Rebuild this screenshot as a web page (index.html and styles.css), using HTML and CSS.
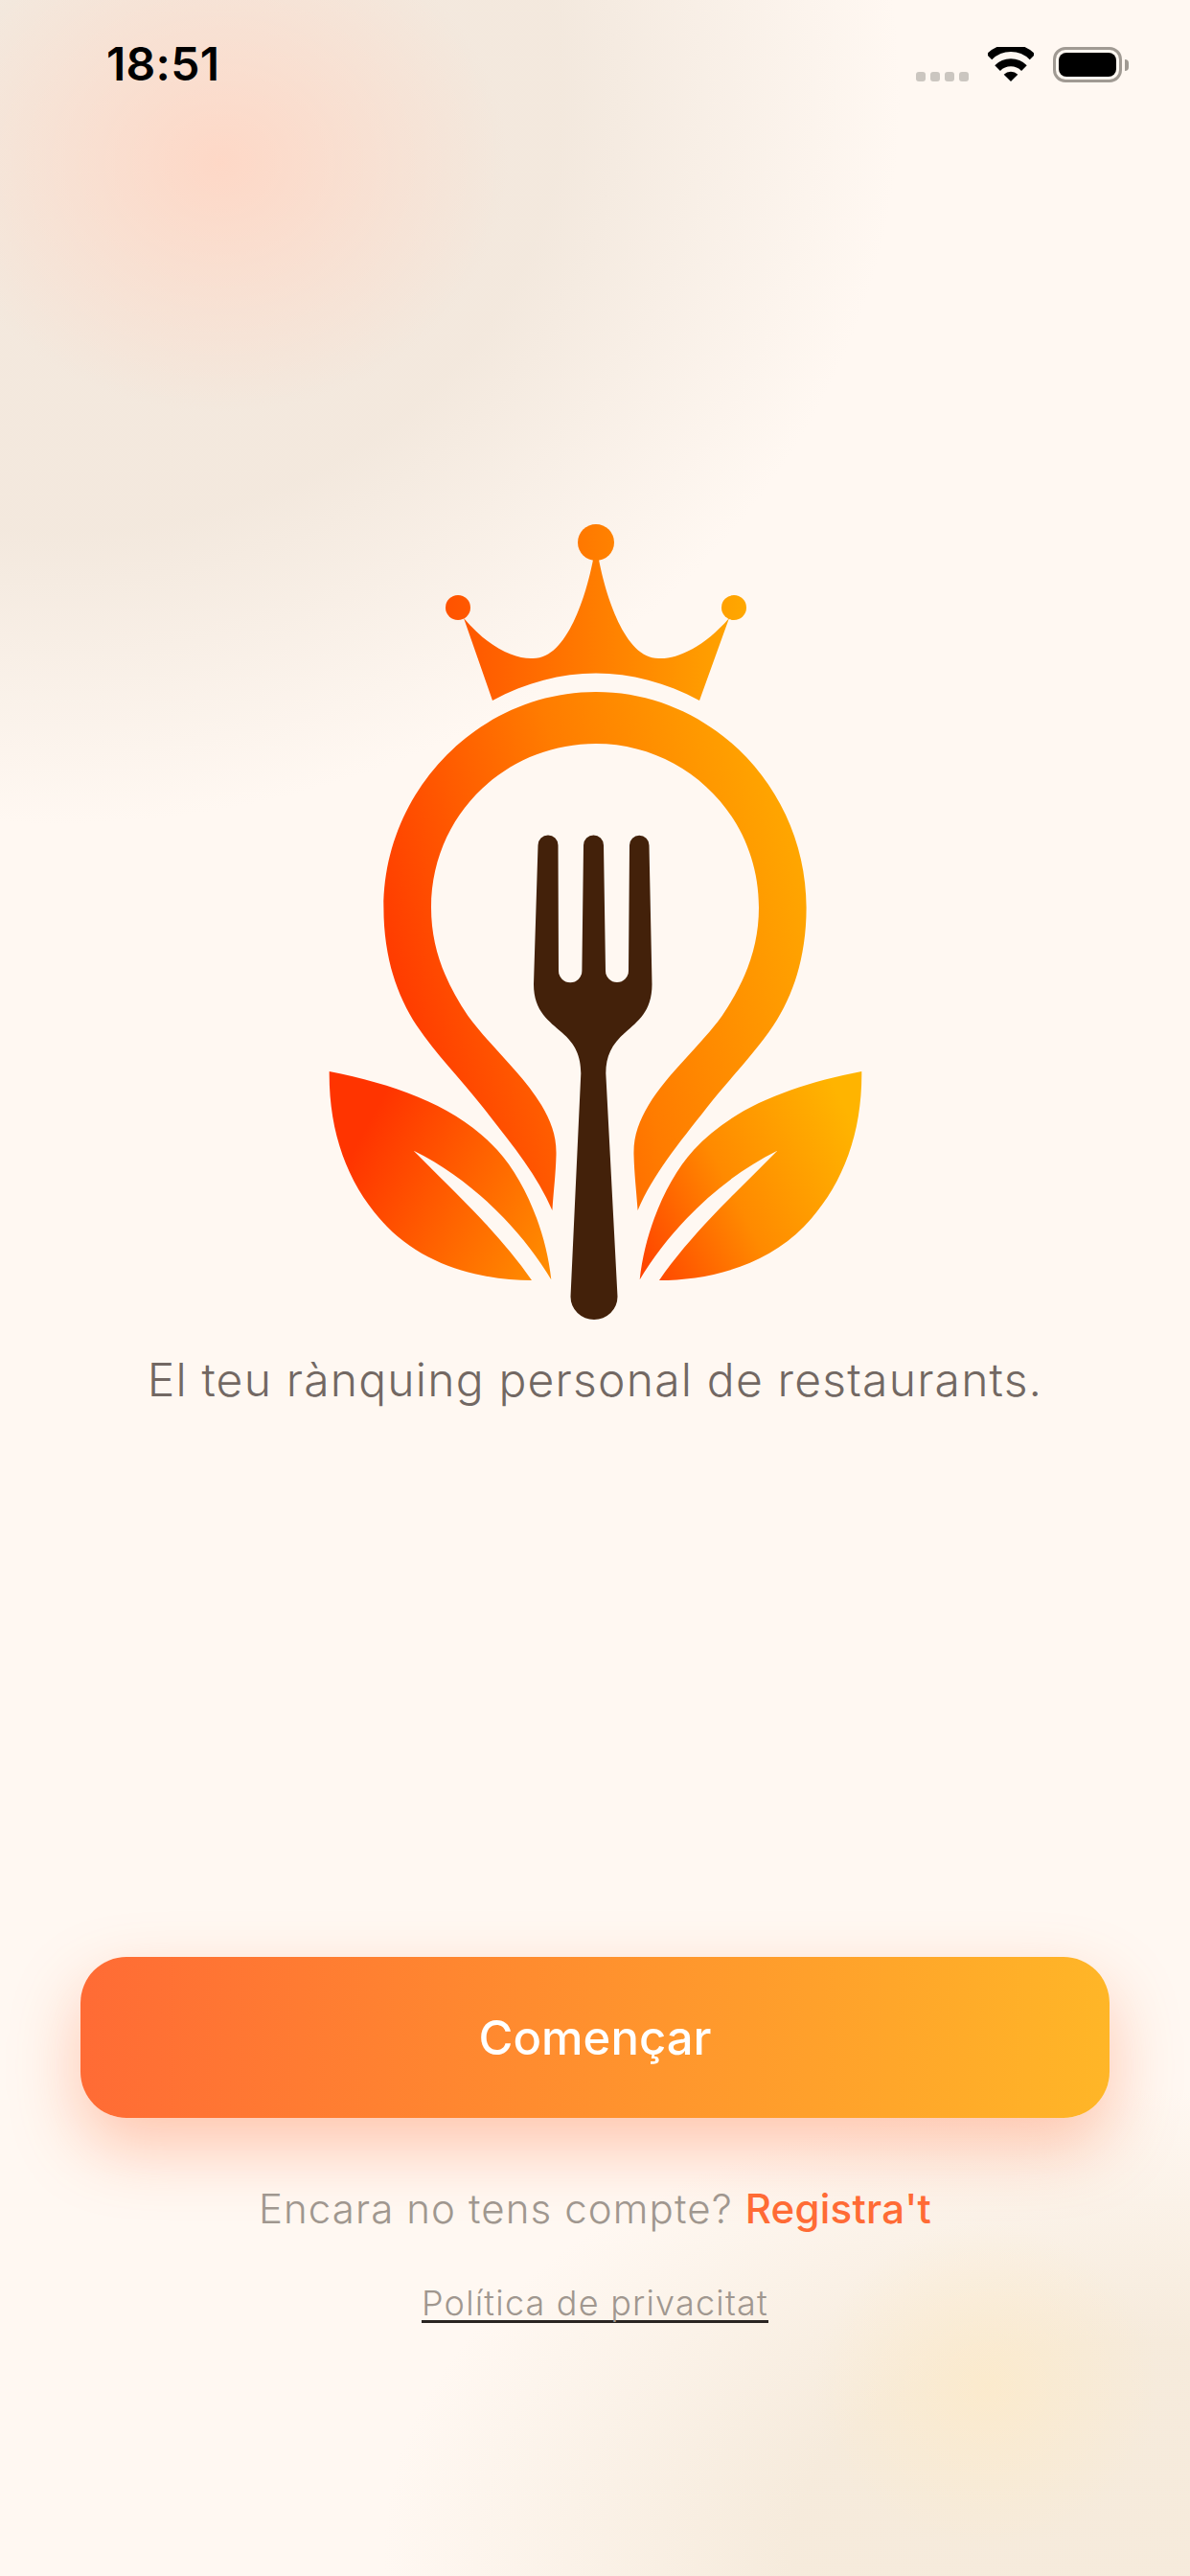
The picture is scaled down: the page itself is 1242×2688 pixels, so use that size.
FILE: index.html
```html
<!DOCTYPE html>
<html lang="ca">
<head>
    <meta charset="UTF-8">
    <meta name="viewport" content="width=device-width, initial-scale=1.0">
    <title>Benvinguda</title>
    <link rel="stylesheet" href="styles.css">
</head>
<body>
    <div class="screen">
        <div class="status-bar">
            <span class="time">18:51</span>
            <div class="status-icons">
                <div class="signal-dots"><i></i><i></i><i></i><i></i></div>
                <svg class="wifi" width="48" height="36" viewBox="0 0 48 36">
                    <path d="M1.4 10.4A32 32 0 0 1 46.6 10.4" fill="none" stroke="#000" stroke-width="8"></path>
                    <path d="M10.1 22.1A19.6 19.6 0 0 1 37.9 22.1" fill="none" stroke="#000" stroke-width="8"></path>
                    <path d="M24 36L16.7 28.7A10.3 10.3 0 0 1 31.3 28.7Z" fill="#000"></path>
                </svg>
                <div class="battery">
                    <div class="battery-body"><div class="battery-level"></div></div>
                    <div class="battery-cap"></div>
                </div>
            </div>
        </div>

        <svg class="logo" width="570" height="840" viewBox="336 540 570 840">
            <defs>
                <linearGradient id="ringGrad" gradientUnits="userSpaceOnUse" x1="400" y1="1000" x2="842" y2="880">
                    <stop offset="0" stop-color="#ff3a00"></stop>
                    <stop offset="0.5" stop-color="#ff7c00"></stop>
                    <stop offset="1" stop-color="#ffa800"></stop>
                </linearGradient>
                <linearGradient id="crownGrad" gradientUnits="userSpaceOnUse" x1="465" y1="640" x2="780" y2="640">
                    <stop offset="0" stop-color="#ff5200"></stop>
                    <stop offset="1" stop-color="#ffa800"></stop>
                </linearGradient>
                <linearGradient id="leafLeft" gradientUnits="userSpaceOnUse" x1="380" y1="1180" x2="580" y2="1290">
                    <stop offset="0" stop-color="#ff3400"></stop>
                    <stop offset="1" stop-color="#ff8a00"></stop>
                </linearGradient>
                <linearGradient id="leafRight" gradientUnits="userSpaceOnUse" x1="670" y1="1320" x2="905" y2="1200">
                    <stop offset="0" stop-color="#ff4400"></stop>
                    <stop offset="0.45" stop-color="#ff8a00"></stop>
                    <stop offset="1" stop-color="#ffb400"></stop>
                </linearGradient>
            </defs>

            <!-- crown -->
            <g fill="url(#crownGrad)">
                <circle cx="622" cy="566" r="19"></circle>
                <circle cx="478" cy="634" r="13"></circle>
                <circle cx="766" cy="634" r="13"></circle>
                <path d="M484 645C510 676 538 688 556 687C592 688 612 620 619 584L625 584C632 620 652 688 688 687C706 688 734 676 761 645L730 731C660 693 584 693 514 731Z"></path>
            </g>

            <!-- bulb outline -->
            <path fill="url(#ringGrad)" d="M622 722C500 722 400.4 825 400.4 947C400.4 1000 415 1040 434.8 1070C455 1100 480 1125 503.7 1155C535 1195 560 1225 576.4 1263C578 1240 580 1225 580.5 1205C581 1185 575 1170 565 1153C545 1120 510 1090 488.4 1060C465 1025 450 990 450 947C450 850 528 776 622 776C714 776 792 850 792 947C792 990 777 1025 753.6 1060C732 1090 697 1120 677 1153C667 1170 661 1185 661.5 1205C662 1225 664 1240 665.6 1263C682 1225 707 1195 738.3 1155C762 1125 787 1100 807.2 1070C827 1040 841.6 1000 841.6 947C841.6 825 744 722 622 722Z"></path>

            <!-- fork -->
            <path fill="#43210a" d="M561.5 882A10.5 10.5 0 0 1 582.5 882L583 1013A12 12 0 0 0 607.4 1013L609 882A10.5 10.5 0 0 1 630 882L632 1013A12 12 0 0 0 656 1013L657 882A10 10 0 0 1 677.5 882L680.5 1027C680.5 1056 665 1066 653 1077C638 1090 632.5 1102 632.3 1120L644.5 1353A24.5 24 0 0 1 595.5 1353L606.3 1120C606 1102 601 1090 586 1077C574 1066 557 1056 557 1027Z"></path>

            <!-- leaves -->
            <path fill="url(#leafLeft)" d="M343.7 1118C415 1132 478 1155 519 1200C548 1232 570 1285 575.3 1335.3C545 1285 495 1232 431.7 1200.7C470 1240 520 1285 555 1336C505 1336 445 1322 404 1280C365 1240 343 1185 343.7 1118Z"></path>
            <path fill="url(#leafRight)" d="M899.3 1118C828 1132 765 1155 724 1200C695 1232 673 1285 667.7 1335.3C698 1285 748 1232 811.3 1200.7C773 1240 723 1285 688 1336C738 1336 798 1322 839 1280C878 1240 900 1185 899.3 1118Z"></path>
        </svg>

        <p class="tagline">El teu rànquing personal de restaurants.</p>

        <div class="actions">
            <button class="btn-start">Començar</button>
            <p class="register">Encara no tens compte? <a href="#">Registra't</a></p>
            <a class="privacy" href="#">Política de privacitat</a>
        </div>
    </div>
</body>
</html>
```

FILE: styles.css
```css
* {
    box-sizing: border-box;
}

body {
    margin: 0;
    font-family: Inter, "Noto Sans", sans-serif;
    background-color: #fff8f2;
}

.screen {
    height: 2688px;
    display: flex;
    flex-direction: column;
    align-items: center;
    overflow: hidden;
    background-color: #fff8f2;
    background-image:
        radial-gradient(ellipse 300px 260px at 230px 170px, rgba(255, 214, 196, 0.9), rgba(255, 214, 196, 0)),
        radial-gradient(ellipse 180px 170px at 1030px 2490px, rgba(255, 234, 195, 0.6), rgba(255, 234, 195, 0)),
        radial-gradient(ellipse 880px 760px at 60px 100px, rgba(235, 222, 208, 0.6) 60%, rgba(235, 222, 208, 0)),
        radial-gradient(ellipse 780px 480px at 1180px 2660px, rgba(240, 226, 205, 0.6) 45%, rgba(240, 226, 205, 0));
}

.status-bar {
    width: 100%;
    height: 120px;
    padding: 39px 64px 0 111px;
    display: flex;
    justify-content: space-between;
    align-items: flex-start;
}

.time {
    font-size: 48px;
    font-weight: 600;
    line-height: 56px;
    letter-spacing: 0.3px;
    color: #000;
}

.status-icons {
    display: flex;
    align-items: flex-start;
    margin-top: 10px;
}

.signal-dots {
    display: flex;
    gap: 5px;
    margin-top: 26px;
    margin-right: 20px;
}

.signal-dots i {
    width: 10px;
    height: 10px;
    border-radius: 3px;
    background-color: #cbc6c0;
}

.wifi {
    display: block;
    margin-right: 20px;
}

.battery {
    display: flex;
    align-items: center;
    height: 37px;
}

.battery-body {
    width: 72px;
    height: 37px;
    padding: 3px;
    border: 3px solid #a09a93;
    border-radius: 13px;
}

.battery-level {
    width: 100%;
    height: 100%;
    border-radius: 8px;
    background-color: #000;
}

.battery-cap {
    width: 4px;
    height: 12px;
    margin-left: 3px;
    border-radius: 0 4px 4px 0;
    background-color: #a09a93;
}

.logo {
    display: block;
    margin-top: 420px;
}

.tagline {
    margin: 32px 0 0;
    font-size: 48px;
    font-weight: 300;
    line-height: 56px;
    letter-spacing: 1.2px;
    color: #726863;
}

.actions {
    margin-top: 574px;
    width: 100%;
    padding: 0 84px;
    display: flex;
    flex-direction: column;
    align-items: center;
}

.btn-start {
    width: 100%;
    height: 168px;
    border: none;
    border-radius: 48px;
    background: linear-gradient(90deg, #ff6b35, #ffb627);
    box-shadow: 0 30px 70px rgba(255, 107, 53, 0.36);
    color: #fff;
    font-family: inherit;
    font-size: 49px;
    font-weight: 500;
}

.register {
    margin: 70px 0 0;
    font-size: 42px;
    font-weight: 300;
    line-height: 50px;
    letter-spacing: 1.1px;
    color: #a0978f;
}

.register a {
    color: #ff6b35;
    font-weight: 500;
    letter-spacing: 0.25px;
    text-decoration: none;
}

.privacy {
    margin-top: 56px;
    font-size: 36px;
    font-weight: 300;
    line-height: 35px;
    letter-spacing: 1.2px;
    color: #a0978f;
    text-decoration: none;
    border-bottom: 3px solid #2a2522;
}
```
